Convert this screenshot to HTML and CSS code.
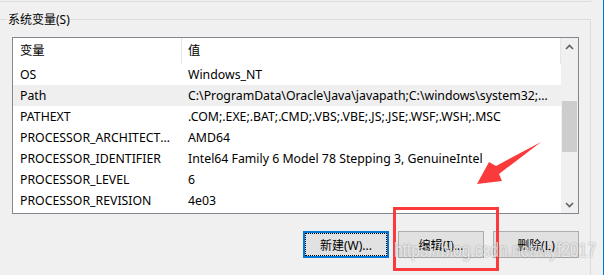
FILE: index.html
```html
<!DOCTYPE html>
<html lang="zh-CN">
<head>
  <meta charset="UTF-8">
  <title>环境变量</title>
  <link rel="stylesheet" href="styles.css">
</head>
<body>
  <div class="screen">
    <div class="dialog">
      <div class="prev-group"></div>
      <div class="group">
        <div class="group-title">系统变量(S)</div>
        <div class="listbox">
          <div class="list">
            <div class="list-head">
              <div class="col name">变量</div>
              <div class="col value">值</div>
            </div>
            <div class="row"><div class="col name">OS</div><div class="col value">Windows_NT</div></div>
            <div class="row selected"><div class="col name">Path</div><div class="col value">C:\ProgramData\Oracle\Java\javapath;C:\windows\system32;C:\windows;C:\windows\System32\Wbem</div></div>
            <div class="row"><div class="col name">PATHEXT</div><div class="col value">.COM;.EXE;.BAT;.CMD;.VBS;.VBE;.JS;.JSE;.WSF;.WSH;.MSC</div></div>
            <div class="row"><div class="col name">PROCESSOR_ARCHITECTURE</div><div class="col value">AMD64</div></div>
            <div class="row"><div class="col name">PROCESSOR_IDENTIFIER</div><div class="col value">Intel64 Family 6 Model 78 Stepping 3, GenuineIntel</div></div>
            <div class="row"><div class="col name">PROCESSOR_LEVEL</div><div class="col value">6</div></div>
            <div class="row"><div class="col name">PROCESSOR_REVISION</div><div class="col value">4e03</div></div>
          </div>
          <div class="scrollbar">
            <div class="sb-btn">
              <svg width="9" height="6" viewBox="0 0 9 6"><polyline points="1,5 4.5,1.5 8,5" fill="none" stroke="#606060" stroke-width="1.6"/></svg>
            </div>
            <div class="sb-track"><div class="sb-thumb"></div></div>
            <div class="sb-btn">
              <svg width="9" height="6" viewBox="0 0 9 6"><polyline points="1,1 4.5,4.5 8,1" fill="none" stroke="#606060" stroke-width="1.6"/></svg>
            </div>
          </div>
        </div>
        <div class="buttons">
          <button class="btn focused">新建(W)...</button>
          <button class="btn">编辑(I)...</button>
          <button class="btn">删除(L)</button>
        </div>
      </div>
    </div>
    <div class="outside"></div>
  </div>

  <!-- annotations drawn over the screenshot -->
  <svg class="arrow" width="80" height="60" viewBox="470 135 80 60">
    <polygon points="541,142 496,166 489,162 477,184 502,181 499,174" fill="#fb3b3b"/>
  </svg>
  <div class="mark-box"></div>
  <div class="watermark">https://blog.csdn.net/wyf2017</div>
</body>
</html>
```

FILE: styles.css
```css
body {
  margin: 0;
  width: 609px;
  height: 275px;
  overflow: hidden;
  background: #f0f0f0;
  color: #000;
  font-family: "Noto Sans", "Noto Sans CJK SC", sans-serif;
  font-size: 12px;
  position: relative;
}

.screen {
  display: flex;
  height: 275px;
}

.dialog {
  width: 603px;
  border-right: 1px solid #0078d7;
}

.outside {
  flex: 1;
  background: #fff;
}

/* bottom edge of the user variables group above */
.prev-group {
  width: 590px;
  height: 1px;
  border-right: 1px solid #dcdcdc;
  border-bottom: 1px solid #dcdcdc;
}

.group {
  margin-top: 17px;
  width: 590px;
  height: 260px;
  border-top: 1px solid #dcdcdc;
  border-right: 1px solid #dcdcdc;
}

.group-title {
  width: fit-content;
  margin: -8px 0 0 7px;
  padding: 0 1px;
  line-height: 15px;
  background: #f0f0f0;
}

/* list view */
.listbox {
  display: flex;
  margin: 10px 0 0 12px;
  width: 565px;
  height: 175px;
  border: 1px solid #828790;
  background: #fff;
}

.list {
  width: 548px;
  font-size: 12.3px;
}

.list-head,
.row {
  display: flex;
}

.list-head {
  height: 26px;
  line-height: 26px;
}

.row {
  height: 21px;
  line-height: 21px;
}

.row.selected {
  background: #efefef;
}

.col {
  white-space: nowrap;
  overflow: hidden;
  text-overflow: ellipsis;
  box-sizing: border-box;
}

.col.name {
  width: 169px;
  padding: 0 6px 0 7px;
}

.col.value {
  flex: 1;
  padding: 0 6px 0 6px;
}

.list-head .col {
  border-right: 1px solid #e5e5e5;
}

.scrollbar {
  width: 17px;
  display: flex;
  flex-direction: column;
  background: #f0f0f0;
}

.sb-btn {
  height: 17px;
  display: flex;
  align-items: center;
  justify-content: center;
}

.sb-track {
  flex: 1;
}

.sb-thumb {
  margin: 46px 1px 0 1px;
  height: 51px;
  background: #cdcdcd;
}

/* buttons */
.buttons {
  display: flex;
  justify-content: flex-end;
  gap: 9px;
  width: 567px;
  margin: 17px 0 0 12px;
}

.btn {
  width: 86px;
  height: 27px;
  padding: 0;
  background: #e1e1e1;
  border: 1px solid #adadad;
  font-family: inherit;
  font-size: 12px;
  color: #000;
}

.btn.focused {
  border: 2px solid #0078d7;
  outline: 1px dotted #000;
  outline-offset: -3px;
}

/* annotations */
.arrow {
  position: absolute;
  left: 470px;
  top: 135px;
}

.mark-box {
  position: absolute;
  left: 393px;
  top: 207px;
  width: 100px;
  height: 58px;
  border: 3px solid #fb3b3b;
}

.watermark {
  position: absolute;
  left: 394px;
  top: 239px;
  font-family: "Liberation Sans", sans-serif;
  font-size: 20px;
  white-space: nowrap;
  color: rgba(255, 255, 255, 0.75);
  text-shadow: 0 0 2px rgba(0, 0, 0, 0.4);
  transform: scaleX(0.78);
  transform-origin: left top;
}
```
